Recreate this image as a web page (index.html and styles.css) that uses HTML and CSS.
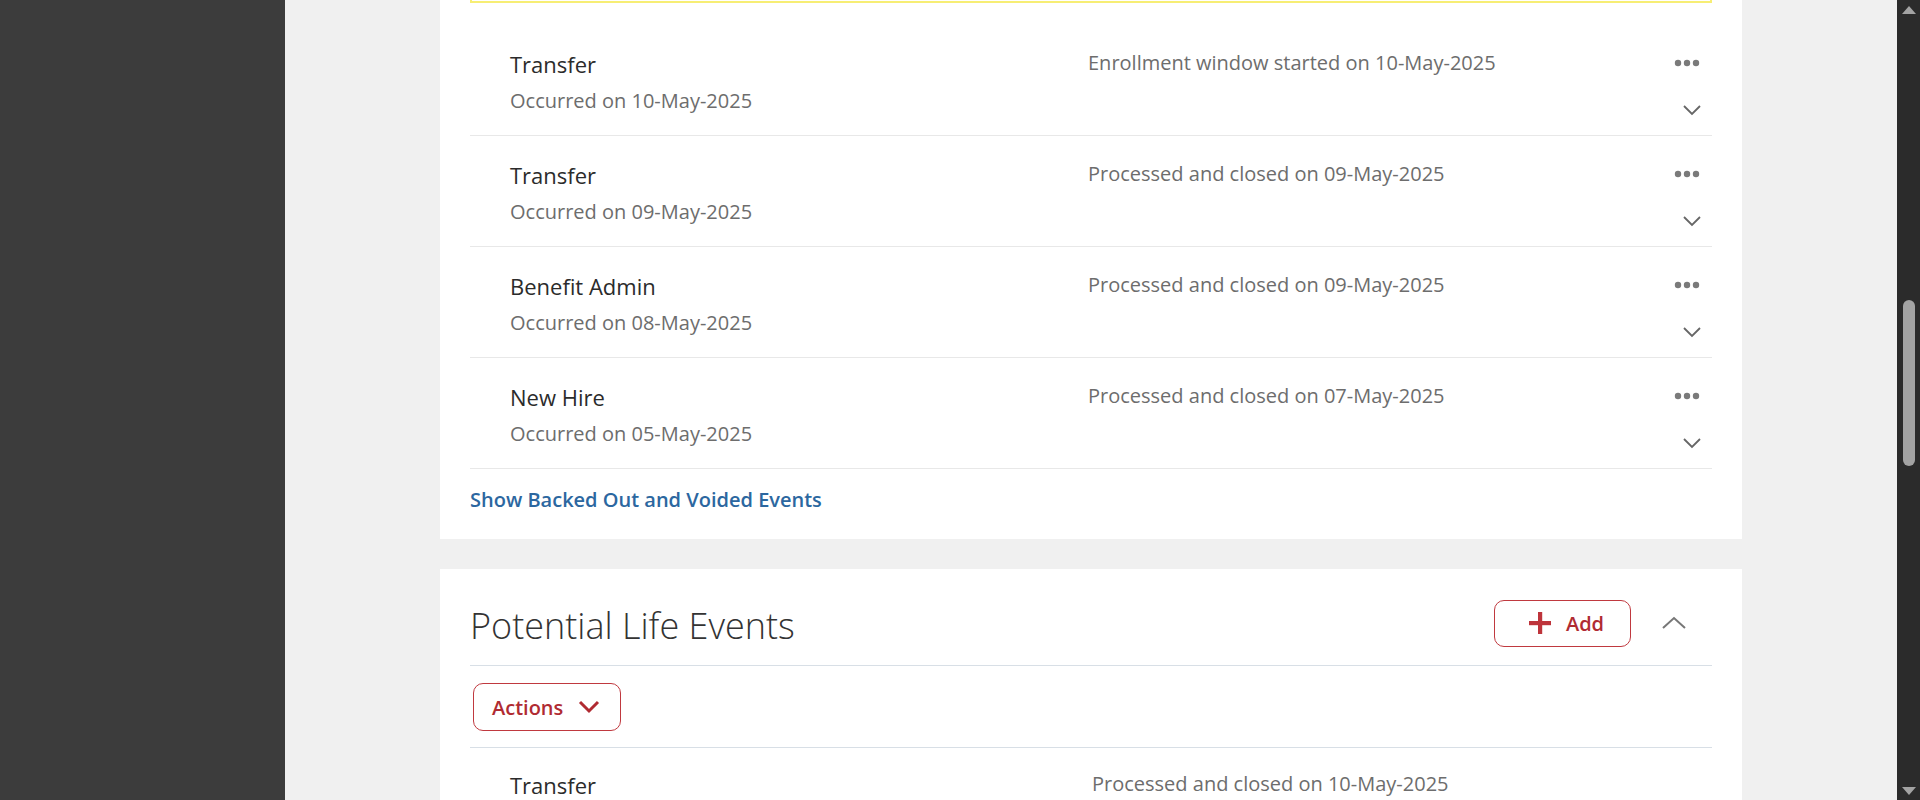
FILE: index.html
```html
<!DOCTYPE html>
<html lang="en">
<head>
<meta charset="utf-8">
<title>Life Events</title>
<link rel="stylesheet" href="styles.css">
</head>
<body>
<div class="app">
  <aside class="sidebar"></aside>
  <main class="main">
    <section class="card card-events">
      <div class="notice"></div>
      <ul class="event-list">
        <li class="event">
          <div class="event-main">
            <div class="event-title">Transfer</div>
            <div class="event-sub">Occurred on 10-May-2025</div>
          </div>
          <div class="event-status">Enrollment window started on 10-May-2025</div>
          <div class="event-actions">
            <svg class="dots" width="26" height="8" viewBox="0 0 26 8"><circle cx="4" cy="4" r="3.2"/><circle cx="13" cy="4" r="3.2"/><circle cx="22" cy="4" r="3.2"/></svg>
            <svg class="chev" width="20" height="12" viewBox="0 0 20 12"><polyline points="2,2 10,10 18,2"/></svg>
          </div>
        </li>
        <li class="event">
          <div class="event-main">
            <div class="event-title">Transfer</div>
            <div class="event-sub">Occurred on 09-May-2025</div>
          </div>
          <div class="event-status">Processed and closed on 09-May-2025</div>
          <div class="event-actions">
            <svg class="dots" width="26" height="8" viewBox="0 0 26 8"><circle cx="4" cy="4" r="3.2"/><circle cx="13" cy="4" r="3.2"/><circle cx="22" cy="4" r="3.2"/></svg>
            <svg class="chev" width="20" height="12" viewBox="0 0 20 12"><polyline points="2,2 10,10 18,2"/></svg>
          </div>
        </li>
        <li class="event">
          <div class="event-main">
            <div class="event-title">Benefit Admin</div>
            <div class="event-sub">Occurred on 08-May-2025</div>
          </div>
          <div class="event-status">Processed and closed on 09-May-2025</div>
          <div class="event-actions">
            <svg class="dots" width="26" height="8" viewBox="0 0 26 8"><circle cx="4" cy="4" r="3.2"/><circle cx="13" cy="4" r="3.2"/><circle cx="22" cy="4" r="3.2"/></svg>
            <svg class="chev" width="20" height="12" viewBox="0 0 20 12"><polyline points="2,2 10,10 18,2"/></svg>
          </div>
        </li>
        <li class="event">
          <div class="event-main">
            <div class="event-title">New Hire</div>
            <div class="event-sub">Occurred on 05-May-2025</div>
          </div>
          <div class="event-status">Processed and closed on 07-May-2025</div>
          <div class="event-actions">
            <svg class="dots" width="26" height="8" viewBox="0 0 26 8"><circle cx="4" cy="4" r="3.2"/><circle cx="13" cy="4" r="3.2"/><circle cx="22" cy="4" r="3.2"/></svg>
            <svg class="chev" width="20" height="12" viewBox="0 0 20 12"><polyline points="2,2 10,10 18,2"/></svg>
          </div>
        </li>
      </ul>
      <a class="link" href="#">Show Backed Out and Voided Events</a>
    </section>

    <section class="card card-potential">
      <header class="card-header">
        <h2 class="card-title">Potential Life Events</h2>
        <button class="btn btn-add">
          <svg width="22" height="22" viewBox="0 0 22 22"><rect x="9" y="0" width="4.2" height="22"/><rect x="0" y="9" width="22" height="4.2"/></svg>
          <span>Add</span>
        </button>
        <svg class="collapse" width="26" height="14" viewBox="0 0 26 14"><polyline points="2,12 13,2 24,12"/></svg>
      </header>
      <div class="toolbar">
        <button class="btn btn-actions">
          <span>Actions</span>
          <svg width="22" height="14" viewBox="0 0 22 14"><polyline points="2,2 11,11 20,2"/></svg>
        </button>
      </div>
      <ul class="event-list event-list-plain">
        <li class="event event-alt">
          <div class="event-main">
            <div class="event-title">Transfer</div>
          </div>
          <div class="event-status">Processed and closed on 10-May-2025</div>
        </li>
      </ul>
    </section>
  </main>
  <div class="scrollbar">
    <div class="sb-arrow sb-up"></div>
    <div class="sb-track"><div class="sb-thumb"></div></div>
    <div class="sb-arrow sb-down"></div>
  </div>
</div>
</body>
</html>
```
FILE: styles.css
```css
* { box-sizing: border-box; }
html, body { margin: 0; padding: 0; height: 100%; }
body {
  font-family: "Open Sans", "Noto Sans", "Liberation Sans", sans-serif;
  background: #f0f0f0;
  color: #333;
  overflow: hidden;
}
.app {
  display: flex;
  height: 800px;
  overflow: hidden;
}
.sidebar {
  width: 285px;
  flex: none;
  background: #3c3c3c;
}
.main {
  flex: 1;
  padding: 0 155px;
  overflow: hidden;
  background: #f0f0f0;
}
.card {
  background: #fff;
  padding: 0 30px;
}
.card-events {
  padding-bottom: 26px;
}
.notice {
  height: 33px;
  margin-top: -30px;
  border: 2px solid #f7ee74;
  border-top: none;
}
.event-list {
  list-style: none;
  margin: 22px 0 0;
  padding: 0;
}
.event-list-plain {
  margin-top: 0;
}
.event {
  display: grid;
  grid-template-columns: 578px 1fr 40px;
  height: 111px;
  border-bottom: 1px solid #e8e8e8;
  padding: 25px 5px 0 40px;
}
.event-alt {
  grid-template-columns: 582px 1fr 40px;
  border-bottom: none;
  padding-top: 23px;
}
.event-title {
  font-size: 22px;
  line-height: 28px;
  color: #2b2b2b;
}
.event-sub {
  margin-top: 10px;
  font-size: 20px;
  line-height: 26px;
  color: #6d6d6d;
}
.event-status {
  font-size: 20px;
  line-height: 26px;
  color: #6d6d6d;
}
.event-actions {
  display: flex;
  flex-direction: column;
  align-items: center;
  padding-top: 9px;
}
.dots { fill: #7a7a7a; display: block; }
.chev {
  display: block;
  margin-top: 37px;
  margin-left: 9px;
  fill: none;
  stroke: #666;
  stroke-width: 1.8;
}
.link {
  display: inline-block;
  margin-top: 18px;
  font-size: 20px;
  line-height: 26px;
  font-weight: 600;
  color: #2c67a0;
  text-decoration: none;
}
.card-potential {
  margin-top: 30px;
}
.card-header {
  display: flex;
  align-items: center;
  padding: 29px 25px 17px 0;
  border-bottom: 1px solid #d8dfe6;
}
.card-title {
  flex: 1;
  margin: 0 0 -3px;
  padding-top: 3px;
  font-size: 36px;
  line-height: 50px;
  font-weight: 300;
  color: #333;
}
.btn {
  display: flex;
  align-items: center;
  background: #fff;
  border: 1px solid #c0393f;
  border-radius: 10px;
  color: #b02b32;
  font-family: inherit;
  font-weight: 600;
  font-size: 20px;
  cursor: pointer;
}
.btn-add {
  width: 137px;
  height: 47px;
  margin-right: 1px;
  justify-content: center;
  gap: 15px;
  padding: 0 0 0 8px;
}
.btn-add svg { fill: #be343b; }
.collapse {
  margin-left: 29px;
  fill: none;
  stroke: #777;
  stroke-width: 2;
}
.toolbar {
  padding: 17px 0 16px 3px;
  border-bottom: 1px solid #d8dfe6;
}
.btn-actions {
  width: 148px;
  height: 48px;
  padding: 0 0 0 18px;
  gap: 15px;
}
.btn-actions svg {
  fill: none;
  stroke: #b02b32;
  stroke-width: 3;
}
.scrollbar {
  width: 23px;
  flex: none;
  background: #2b2b2b;
  display: flex;
  flex-direction: column;
  align-items: center;
}
.sb-arrow {
  width: 0;
  height: 0;
  border-left: 7px solid transparent;
  border-right: 7px solid transparent;
}
.sb-up {
  margin-top: 6px;
  border-bottom: 8px solid #a3a3a3;
}
.sb-down {
  margin-bottom: 5px;
  border-top: 8px solid #a3a3a3;
}
.sb-track {
  flex: 1;
  width: 100%;
  display: flex;
  justify-content: center;
  padding-top: 286px;
}
.sb-thumb {
  width: 12px;
  height: 166px;
  border-radius: 6px;
  background: #a3a3a3;
}
```
